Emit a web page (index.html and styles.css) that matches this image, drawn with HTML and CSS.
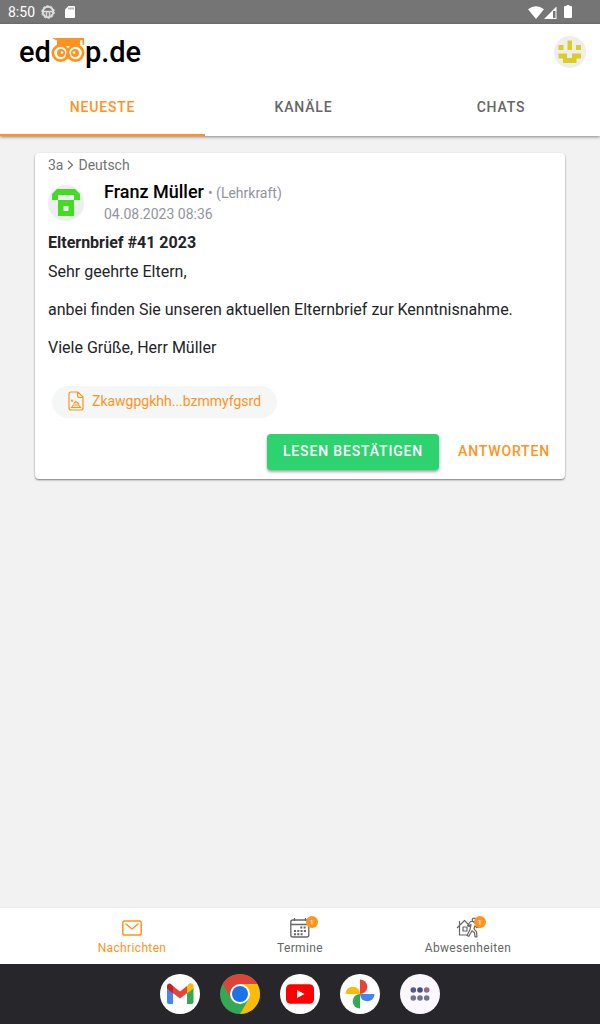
FILE: index.html
```
<!DOCTYPE html>
<html lang="de">
<head>
<meta charset="utf-8">
<meta name="viewport" content="width=device-width, initial-scale=1">
<title>edoop.de</title>
<link rel="stylesheet" href="styles.css">
</head>
<body>
<div class="status-bar">
  <span class="clock">8:50</span>
  <svg width="14" height="14" viewBox="0 0 14 14" fill="none" stroke="#dedede"><circle cx="7" cy="7" r="5.2" stroke-width="2"/><circle cx="7" cy="7" r="6.4" stroke-width="1" stroke-dasharray="2 2"/><path d="M2 6.500h10M5.500 7v4M8.500 7v4" stroke-width="1.500"/></svg>
  <svg class="sd" width="10" height="12" viewBox="0 0 10 12"><path fill="#fff" d="M3.500 0H9q1 0 1 1v10q0 1-1 1H1q-1 0-1-1V3.500z"/><path stroke="#757575" d="M4 1.500v2M6 1.500v2M8 1.500v2"/></svg>
  <span class="spacer"></span>
  <svg width="16" height="13" viewBox="0 0 16 13"><path fill="#fff" d="M0 3.200Q8-2.600 16 3.200L8 13z"/></svg>
  <svg width="13" height="13" viewBox="0 0 13 13"><path fill="#fff" d="M0 13 12.500.5V13z"/><path fill="#757575" d="M9 5h2.500v7H9z"/></svg>
  <svg class="battery" width="8" height="13" viewBox="0 0 8 13"><path fill="#fff" d="M2.500 0h3v1H7q1 0 1 1v10q0 1-1 1H1q-1 0-1-1V2q0-1 1-1h1.500z"/></svg>
</div>

<header class="app-header">
  <div class="toolbar">
    <a class="logo" href="#" aria-label="edoop.de"><span>ed</span><svg class="owl" width="34" height="28" viewBox="0 0 34 28"><path fill="#ff931e" d="M1 0h32v7h-1.500V2L29 2.500V8H6V2.500z"/><g fill="#fff" stroke="#ff931e" stroke-width="2.800"><circle cx="9.500" cy="15" r="7.600"/><circle cx="24.500" cy="15" r="7.600"/></g><path fill="#ff931e" d="m14.500 17 2.500 5 2.500-5-2.500-3z"/><circle cx="10" cy="15" r="4" fill="#ff931e"/><circle cx="24" cy="15" r="4" fill="#ff931e"/><circle cx="11" cy="14.500" r="1.300" fill="#fff"/><circle cx="23" cy="14.500" r="1.300" fill="#fff"/></svg><span>p.de</span></a>
    <button class="profile" type="button" aria-label="Profil"><svg width="32" height="32" viewBox="0 0 32 32"><circle cx="16" cy="16" r="16" fill="#eee"/><path fill="#dacd25" d="M13.500 4.500H18V14h-4.500zM4.500 9h5v5h-5zM22 9h5v5h-5zM4.500 17.500H13V22h5v-4.500h9v5h-4.500V27H9v-4.500H4.500z"/></svg></button>
  </div>
  <nav class="tabs">
    <button class="tab active" type="button">NEUESTE</button>
    <button class="tab" type="button">KANÄLE</button>
    <button class="tab" type="button">CHATS</button>
  </nav>
</header>

<main class="content">
  <article class="card">
    <div class="breadcrumb"><span>3a</span><svg width="7" height="10" viewBox="0 0 7 10" fill="none" stroke="#737373" stroke-width="1.200"><path d="m1 .8 4.500 4.200L1 9.200"/></svg><span>Deutsch</span></div>
    <div class="sender">
      <svg width="36" height="36" viewBox="0 0 36 36"><circle cx="18" cy="18" r="18" fill="#eee"/><path fill="#42dc23" fill-rule="evenodd" d="M9 4h18l5 5v6h-6v5h0v11H10V15H4V9zM10 10v5h16v-5zM15.500 21v5h5v-5z"/></svg>
      <div>
        <div><span class="name">Franz Müller</span> <span class="role">• (Lehrkraft)</span></div>
        <time class="date" datetime="2023-08-04T08:36">04.08.2023 08:36</time>
      </div>
    </div>
    <h1 class="subject">Elternbrief #41 2023</h1>
    <div class="message">
      <p>Sehr geehrte Eltern,</p>
      <p>anbei finden Sie unseren aktuellen Elternbrief zur Kenntnisnahme.</p>
      <p>Viele Grüße, Herr Müller</p>
    </div>
    <a class="attachment" href="#"><svg width="16" height="20" viewBox="0 0 16 20" fill="none" stroke="#ff931e" stroke-width="1.200"><path d="M3 1h7l5 5v11q0 2-2 2H3q-2 0-2-2V3q0-2 2-2zM9.500 1v3.500q0 2 2 2H15M3.500 16.500l2-2.500h5l2 2.500zM5.500 12.500l2.500-2 3 2.500"/><circle cx="4" cy="9.700" r=".5"/></svg><span>Zkawgpgkhh...bzmmyfgsrd</span></a>
    <div class="actions">
      <button class="button solid" type="button">LESEN BESTÄTIGEN</button>
      <button class="button clear" type="button">ANTWORTEN</button>
    </div>
  </article>
</main>

<nav class="bottom-nav">
  <a class="nav-item active" href="#"><span class="nav-icon"><svg width="24" height="24" viewBox="0 0 24 24" fill="none" stroke="currentColor" stroke-width="1.500" stroke-linecap="round" stroke-linejoin="round"><rect x="2.800" y="5" width="18.400" height="14" rx="1.800"/><path d="m6 8 6 5 6-5"/></svg></span>Nachrichten</a>
  <a class="nav-item" href="#"><span class="nav-icon"><svg width="24" height="24" viewBox="0 0 24 24" fill="none" stroke="currentColor" stroke-width="1.300"><rect x="2.800" y="4" width="18" height="17" rx="2"/><path d="M3 8.500h18M6.500 2v3M17.500 2v3"/><path stroke-width="2" stroke-dasharray="2 1.300" d="M12.300 11.500h6M6 15h12M6 18.300h9"/></svg><b class="badge">1</b></span>Termine</a>
  <a class="nav-item" href="#"><span class="nav-icon"><svg width="24" height="24" viewBox="0 0 24 24" fill="none" stroke="currentColor" stroke-width="1.200" stroke-linejoin="round"><path d="m1 12 7.500-7.500 6 6M3.500 10v9H12M3.500 8.500V5M7 11h4v4H7zM17 5.500l-2.500 0-3 4 1.500 1 2-2-1 5-3 6 1.800.8 3.200-5.500 2.500 2 .5 4h2l-.5-5-2.500-3 1-3 2 2 2-1-2.500-3z"/><circle cx="18" cy="4" r="1.800"/></svg><b class="badge">1</b></span>Abwesenheiten</a>
</nav>

<nav class="dock">
  <a href="#" aria-label="Gmail"><svg width="40" height="40" viewBox="0 0 40 40"><circle cx="20" cy="20" r="20" fill="#fff"/><path fill="#4285f4" d="M7 14v14q0 2 2 2h4V18z"/><path fill="#34a853" d="M27 18v12h4.500q2 0 2-2V14z"/><path fill="#fbbc04" d="M27 12.500v7l6.500-5v-2c0-3-3-4-5-2.500z"/><path fill="#ea4335" d="m13 12 7 5.500 7-5.500v7.200l-7 5.300-7-5.300z"/><path fill="#c5221f" d="M7 12.500v2l6 5V12l-1.500-1.500C9 8.500 7 10 7 12.500z"/></svg></a>
  <a href="#" aria-label="Chrome"><svg width="40" height="40" viewBox="0 0 40 40"><circle cx="20" cy="20" r="20" fill="#34a853"/><path fill="#db4437" d="M2.700 10A20 20 0 0 1 37.300 10H20L11.300 25z"/><path fill="#fbbc05" d="M37.300 10A20 20 0 0 1 20 40L28.700 25 20 10z"/><circle cx="20" cy="20" r="10" fill="#fff"/><circle cx="20" cy="20" r="8" fill="#1a73e8"/></svg></a>
  <a href="#" aria-label="YouTube"><svg width="40" height="40" viewBox="0 0 40 40"><circle cx="20" cy="20" r="20" fill="#fff"/><rect x="6" y="10.300" width="28" height="19.500" rx="4.500" fill="red"/><path fill="#fff" d="m17 16 7.500 4-7.500 4z"/></svg></a>
  <a href="#" aria-label="Fotos"><svg width="40" height="40" viewBox="0 0 40 40"><circle cx="20" cy="20" r="20" fill="#fff"/><path fill="#ea4335" d="M20 5.500a7.250 7.250 0 0 1 0 14.500z"/><path fill="#4285f4" d="M34.500 20a7.250 7.250 0 0 1-14.500 0z"/><path fill="#34a853" d="M20 34.500a7.250 7.250 0 0 1 0-14.500z"/><path fill="#fbbc04" d="M5.500 20a7.250 7.250 0 0 1 14.500 0z"/></svg></a>
  <a href="#" aria-label="Alle Apps"><svg width="40" height="40" viewBox="0 0 40 40"><circle cx="20" cy="20" r="20" fill="#fbf7ff"/><g fill="#73738c"><circle cx="13.300" cy="16" r="2.800" fill="#50589c"/><circle cx="20" cy="16" r="2.800" fill="#414b8d"/><circle cx="26.700" cy="16" r="2.800" fill="#936a86"/><circle cx="13.300" cy="24" r="2.800"/><circle cx="20" cy="24" r="2.800"/><circle cx="26.700" cy="24" r="2.800"/></g></svg></a>
</nav>
</body>
</html>
```
FILE: styles.css
```
* { box-sizing: border-box; }
body {
  margin: 0;
  min-height: 100vh;
  display: flex;
  flex-direction: column;
  background: #f2f2f2;
  color: #222428;
  font-family: Roboto, sans-serif;
  font-size: 16px;
}
button { font: inherit; border: 0; background: none; padding: 0; cursor: pointer; }
a { color: inherit; text-decoration: none; }
svg { display: block; flex: none; }

.status-bar {
  height: 24px;
  padding: 0 28px 0 8px;
  display: flex;
  align-items: center;
  background: #757575;
  color: #fff;
}
.clock { font-size: 14px; margin-right: 6px; }
.sd { margin-left: 10px; }
.spacer { flex: 1; }
.battery { margin-left: 7px; margin-bottom: 2px; }

.app-header { background: #fff; box-shadow: 0 1px 3px rgba(0, 0, 0, .45); }
.toolbar {
  height: 56px;
  padding: 0 14px 0 19px;
  display: flex;
  align-items: center;
  justify-content: space-between;
}
.logo {
  display: flex;
  align-items: center;
  color: #000;
  font-size: 29px;
  font-weight: 500;
  line-height: 32px;
}
.profile { display: block; }
.tabs { display: grid; grid-template-columns: 205fr 197fr 198fr; }
.tab {
  height: 56px;
  border-bottom: 2px solid transparent;
  color: #666;
  font-size: 14px;
  font-weight: 500;
  letter-spacing: .06em;
}
.tab.active { color: #ff931e; border-color: #ff931e; }

.content { flex: 1; padding: 17px 35px; }
.card {
  padding: 4px 13px 9px;
  border-radius: 4px;
  background: #fff;
  box-shadow: 0 1px 2px rgba(0, 0, 0, .5);
}
.breadcrumb {
  display: flex;
  align-items: center;
  gap: 4px;
  color: #737373;
  font-size: 14px;
  line-height: 16px;
}
.sender { display: flex; align-items: center; gap: 20px; margin-top: 8px; line-height: 21px; }
.name { color: #000; font-size: 18px; font-weight: 500; }
.role, .date { color: #92949c; font-size: 14px; }
.date { display: block; }
.subject { margin: 8px 0 10px; font-size: 16px; font-weight: 700; line-height: 19px; }
.message { display: grid; gap: 19px; line-height: 19px; }
.message p { margin: 0; }
.attachment {
  display: inline-flex;
  align-items: center;
  gap: 8px;
  height: 32px;
  margin: 29px 4px 16px;
  padding: 0 16px 2px;
  border-radius: 16px;
  background: #f5f7f7;
  color: #ff931e;
  font-size: 14px;
}
.actions { display: flex; flex-wrap: wrap; justify-content: flex-end; gap: 3px; }
.button {
  height: 36px;
  padding: 0 16px 2px;
  border-radius: 4px;
  font-size: 14px;
  font-weight: 500;
  letter-spacing: .06em;
}
.solid { background: #2dd36f; color: #fff; box-shadow: 0 2px 3px rgba(0, 0, 0, .35); }
.clear { color: #ff931e; padding-right: 2px; }

.bottom-nav {
  display: flex;
  justify-content: center;
  height: 57px;
  border-top: 1px solid #ececec;
  background: #fff;
}
.nav-item {
  flex: 1;
  max-width: 168px;
  display: flex;
  flex-direction: column;
  align-items: center;
  padding-top: 8px;
  color: #666;
  font-size: 12px;
  line-height: 16px;
  letter-spacing: .03em;
}
.nav-item.active { color: #ff931e; }
.nav-icon { position: relative; }
.badge {
  position: absolute;
  top: 0;
  right: -6px;
  width: 12px;
  height: 12px;
  border-radius: 50%;
  background: #ff931e;
  color: #fff;
  font-size: 8px;
  font-weight: 400;
  line-height: 13px;
  text-align: center;
}
.dock {
  height: 60px;
  display: flex;
  align-items: center;
  justify-content: center;
  gap: 20px;
  background: #27272b;
}
```
